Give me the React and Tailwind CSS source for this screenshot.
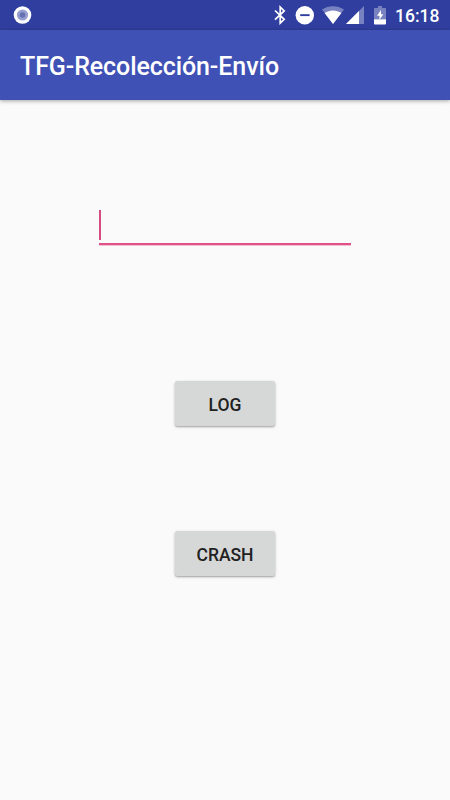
function BluetoothIcon() {
  return (
    <svg className="h-5 w-3 shrink-0" viewBox="0 0 12 20" fill="none" stroke="#fff" strokeWidth="1.7">
      <path d="M1 5.5 10.2 14.3 6.2 18.1V2.1L10.2 5.9 1 14.7" />
    </svg>
  );
}

function DoNotDisturbIcon() {
  return (
    <svg className="ml-[9px] h-5 w-5 shrink-0" viewBox="0 0 20 20">
      <circle cx="9.8" cy="10.2" r="9.2" fill="#fff" />
      <rect x="5.2" y="9.2" width="9.4" height="1.9" fill="#303f9f" />
    </svg>
  );
}

function WifiIcon() {
  return (
    <svg className="ml-[7px] h-5 w-[23px] shrink-0" viewBox="0 0 23 20" fill="#fff">
      <path d="M0 4.6C6.5 0 15.5 0 22 4.6L11 19Z" opacity=".35" />
      <path d="M2.6 8.1C7.5 4.6 14.5 4.6 19.4 8.1L11 19Z" />
    </svg>
  );
}

function SignalIcon() {
  return (
    <svg className="ml-px h-5 w-[18px] shrink-0" viewBox="0 0 18 20" fill="#fff">
      <path d="M0 19 18 1V19Z" opacity=".35" />
      <path d="M0 19 13 6V19Z" />
    </svg>
  );
}

function BatteryIcon() {
  return (
    <svg className="ml-2.5 h-5 w-3 shrink-0" viewBox="0 0 12 20" fill="#fff">
      <path d="M4 1h4v2h3.1q.9 0 .9.9V14H0V3.9Q0 3 .9 3H4Z" opacity=".35" />
      <path d="M0 14.2h12v4.4q0 .9-.9.9H.9q-.9 0-.9-.9Z" />
      <path d="M7 5 3 10.8h2.5v4L9.3 9.2H7Z" />
    </svg>
  );
}

function RaisedButton({ children }) {
  return (
    <button className="h-[45px] w-[100px] rounded-[2.5px] bg-[#d6d7d7] pt-0.5 text-[17.5px] leading-5 font-medium text-[#212121] shadow-[0_1px_3px_rgba(0,0,0,0.28),0_1px_1px_rgba(0,0,0,0.12)]">
      {children}
    </button>
  );
}

export default function App() {
  return (
    <div className="flex h-[800px] w-[450px] flex-col overflow-hidden bg-[#fafafa] font-['Roboto',sans-serif]">
      <div className="flex h-[30px] shrink-0 items-center bg-[#303f9f] pr-2.5 pl-[13px]">
        <svg className="h-5 w-5" viewBox="0 0 20 20">
          <circle cx="9.5" cy="10" r="8.8" fill="#fff" />
          <circle cx="9.5" cy="10" r="5.6" fill="#979fcf" />
          <circle cx="9.5" cy="10" r="2.8" fill="#6670b4" />
        </svg>
        <div className="ml-auto flex items-center">
          <BluetoothIcon />
          <DoNotDisturbIcon />
          <WifiIcon />
          <SignalIcon />
          <BatteryIcon />
          <span className="ml-[9px] w-[45px] pt-px text-[17.5px] leading-5 font-medium whitespace-nowrap text-white">16:18</span>
        </div>
      </div>
      <header className="flex h-[70px] shrink-0 items-center bg-[#3f51b5] px-5 pt-1 shadow-[0_1px_4px_rgba(0,0,0,0.35)]">
        <h1 className="text-[25px] leading-8 font-medium tracking-[-0.09px] whitespace-nowrap text-white">TFG-Recolección-Envío</h1>
      </header>
      <main className="flex flex-col items-center pt-[110px]">
        <div className="h-[35px] w-[252px] border-b-2 border-[#df5288] shadow-[0_1px_0_#f3c0d3]">
          <div className="h-[30px] w-0.5 bg-[#d44c82]" />
        </div>
        <div className="mt-[136px] flex flex-col gap-[105px]">
          <RaisedButton>LOG</RaisedButton>
          <RaisedButton>CRASH</RaisedButton>
        </div>
      </main>
    </div>
  );
}
